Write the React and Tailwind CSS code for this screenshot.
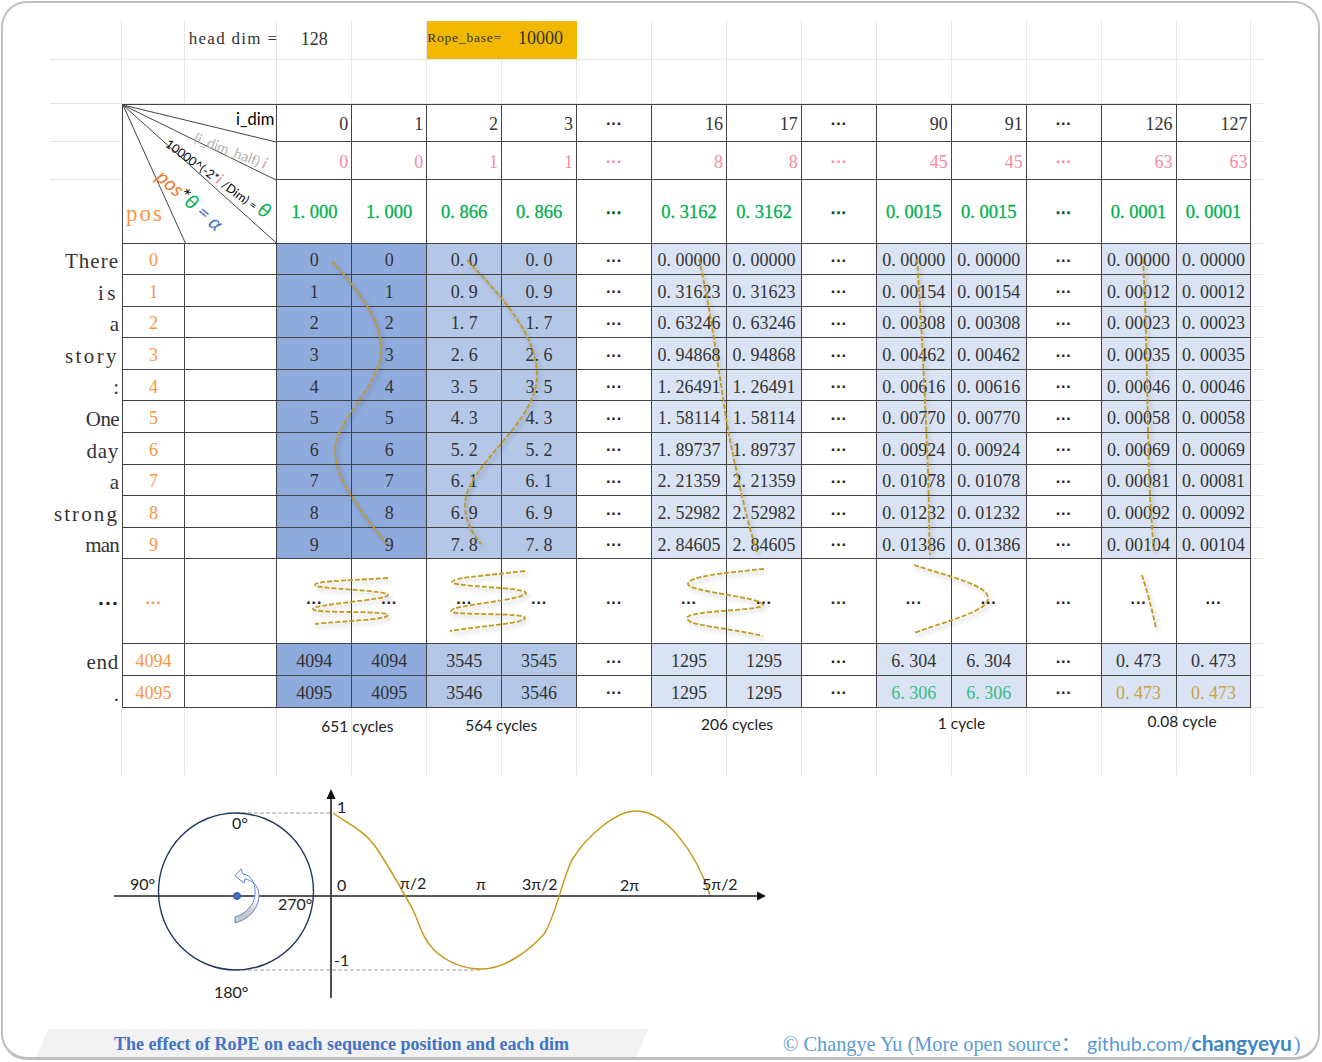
import React, { Fragment } from "react";

const GRID = "border-r border-b border-[#e6e6e6]";
const T = "border-r border-b border-[#444] flex items-center justify-center";
const DOTS = "···";

const fills = ["bg-[#8faadc]", "bg-[#8faadc]", "bg-[#b4c7e7]", "bg-[#b4c7e7]", "", "bg-[#dae3f3]", "bg-[#dae3f3]", "", "bg-[#dae3f3]", "bg-[#dae3f3]", "", "bg-[#dae3f3]", "bg-[#dae3f3]"];

const dims = ["0", "1", "2", "3", DOTS, "16", "17", DOTS, "90", "91", DOTS, "126", "127"];
const half = ["0", "0", "1", "1", DOTS, "8", "8", DOTS, "45", "45", DOTS, "63", "63"];
const theta = ["1. 000", "1. 000", "0. 866", "0. 866", DOTS, "0. 3162", "0. 3162", DOTS, "0. 0015", "0. 0015", DOTS, "0. 0001", "0. 0001"];

const words = [
  ["There", "tracking-[1px]"],
  ["is", "tracking-[3.5px]"],
  ["a", ""],
  ["story", "tracking-[2.4px]"],
  [":", ""],
  ["One", "tracking-[-0.6px]"],
  ["day", "tracking-[0.7px]"],
  ["a", ""],
  ["strong", "tracking-[2.1px]"],
  ["man", "tracking-[-0.8px]"],
];
const B = ["0. 0", "0. 9", "1. 7", "2. 6", "3. 5", "4. 3", "5. 2", "6. 1", "6. 9", "7. 8"];
const C = ["0. 00000", "0. 31623", "0. 63246", "0. 94868", "1. 26491", "1. 58114", "1. 89737", "2. 21359", "2. 52982", "2. 84605"];
const D = ["0. 00000", "0. 00154", "0. 00308", "0. 00462", "0. 00616", "0. 00770", "0. 00924", "0. 01078", "0. 01232", "0. 01386"];
const E = ["0. 00000", "0. 00012", "0. 00023", "0. 00035", "0. 00046", "0. 00058", "0. 00069", "0. 00081", "0. 00092", "0. 00104"];

const dataRows = words.map(([w, cls], i) => ({
  word: w,
  cls,
  pos: String(i),
  vals: [String(i), String(i), B[i], B[i], DOTS, C[i], C[i], DOTS, D[i], D[i], DOTS, E[i], E[i]],
}));

const lastA = ["4094", "4094", "3545", "3545", DOTS, "1295", "1295", DOTS, "6. 304", "6. 304", DOTS, "0. 473", "0. 473"];
const lastB = ["4095", "4095", "3546", "3546", DOTS, "1295", "1295", DOTS, "6. 306", "6. 306", DOTS, "0. 473", "0. 473"];
const lastBColors = ["", "", "", "", "", "", "", "", "text-[#2fc084]", "text-[#2fc084]", "", "text-[#c9a441]", "text-[#c9a441]"];

const cycleCells = ["", "", "", "pl-[44px] pt-[7px]", "", "pl-[38px] pt-[6px]", "", "", "pl-[49px] pt-[5px]", "", "", "pl-[61px] pt-[4px]", "", "", "pl-[46px] pt-[2px]", ""];
const cycleText = { 3: "651 cycles", 5: "564 cycles", 8: "206 cycles", 11: "1 cycle", 14: "0.08 cycle" };

function Dots({ className = "" }) {
  return <span className={"[font-family:'Liberation_Sans',sans-serif] font-bold text-[16px] leading-none text-[#222] " + className}>{DOTS}</span>;
}

function Val({ v, className = "" }) {
  if (v === DOTS) return <Dots className={className} />;
  return <span className={"whitespace-nowrap " + className}>{v}</span>;
}

function Word({ children, className = "" }) {
  return (
    <div className={"flex items-center justify-end pr-[3px] pt-[5px] text-[21px] text-[#333] " + className}>
      {children}
    </div>
  );
}

function Curves() {
  const dash = { fill: "none", stroke: "#c49a1c", strokeWidth: 1.8, strokeDasharray: "5 2" };
  const paths = [
    "M332,261 C352,284 381,315 381,350 C381,385 335,420 335,450 C335,483 368,520 387,544",
    "M467,260 C490,285 537,330 537,375 C537,425 465,465 465,505 C465,520 472,533 481,544",
    "M699,259 C715,330 722,400 730,440 C738,480 748,525 757,552",
    "M917,259 C922,330 925,400 928,470 C929,500 929,530 930,555",
    "M1143,259 C1147,330 1147,400 1149,470 C1150,500 1152,530 1154,552",
    "M388,578 C340,581 315,581 315,585 C315,589 388,590 388,595 C388,600 313,604 313,609 C313,614 388,610 388,615 C388,620 340,621 315,624",
    "M525,571 C480,576 452,578 452,582 C452,587 526,587 526,593 C526,600 451,605 451,611 C451,616 525,612 525,618 C525,623 490,625 450,631",
    "M764,569 C720,573 688,577 688,584 C688,592 763,597 763,605 C763,611 687,610 687,618 C687,626 725,627 763,636",
    "M914,565 C950,577 988,585 988,598 C988,611 950,620 914,633",
    "M1142,575 Q1150,600 1156,628",
  ];
  return (
    <svg className="absolute left-0 top-0 w-[1322px] h-[1062px] pointer-events-none drop-shadow-[2px_3px_2px_rgba(0,0,0,0.25)]" viewBox="0 0 1322 1062">
      {paths.map((d) => (
        <path key={d} d={d} {...dash} />
      ))}
    </svg>
  );
}

function Diagonal() {
  return (
    <div className="relative col-span-2 row-span-3 border-l border-t border-r border-b border-[#444] overflow-hidden">
      <svg className="absolute left-0 top-0 w-[156px] h-[140px]" viewBox="0 0 156 140">
        <g stroke="#444" strokeWidth="1" fill="none">
          <line x1="0" y1="0" x2="155" y2="37.5" />
          <line x1="0" y1="0" x2="155" y2="76" />
          <line x1="0" y1="0" x2="155" y2="139.5" />
          <line x1="0" y1="0" x2="63" y2="139.5" />
        </g>
      </svg>
      <span className="absolute left-[113px] top-[2px] whitespace-nowrap [font-family:'Lato',sans-serif] text-[16.5px] text-black">i_dim</span>
      <span className="absolute left-[72px] top-[22px] origin-left rotate-[21deg] whitespace-nowrap [font-family:'Lato',sans-serif] text-[14px] leading-[18px] text-[#b3b3b3]">
        (i_dim_half) <span className="italic text-[#f48fa0] text-[16px]">i</span>
      </span>
      <span className="absolute left-[45px] top-[26px] origin-left rotate-[36deg] whitespace-nowrap [font-family:'Lato',sans-serif] text-[12.2px] leading-[16px] text-black">
        10000^(-2*<span className="italic text-[#f48fa0] text-[16px]">i</span> /Dim) = <span className="italic text-[#00b050] text-[20px]">θ</span>
      </span>
      <span className="absolute left-[37px] top-[57px] origin-left rotate-[41deg] whitespace-nowrap [font-family:'Lato',sans-serif] text-[20px] leading-[22px] italic">
        <span className="text-[#f4782a]">pos</span>
        <span className="text-black not-italic">*</span>
        <span className="text-[#00b050]">θ</span>
        <span className="text-[#4472c4]"> = α</span>
      </span>
      <span className="absolute left-[3px] top-[92px] text-[23px] tracking-[2px] text-[#f79646]">pos</span>
    </div>
  );
}

function Sheet() {
  return (
    <div className="ml-[50px] grid grid-cols-[72px_63px_92.3px_repeat(13,74.95px)_11.4px] grid-rows-[39px_44px_37.5px_38.5px_63.5px_repeat(10,31.6px)_85px_31.6px_31.6px_67.3px] [font-family:'Liberation_Serif',serif] text-[18px] text-[#333]">
      {/* top sheet row */}
      <div className={GRID} />
      <div className={GRID} />
      <div className={GRID + " flex items-center justify-end pb-[2px] whitespace-nowrap text-[17px] tracking-[1.3px]"}>
        <span className="-mr-[2px]">head dim =</span>
      </div>
      <div className={GRID + " flex items-center justify-center pb-[2px]"}>128</div>
      <div className={GRID} />
      <div className="col-span-2 bg-[#f2b800] flex items-center justify-between pb-[3px] pr-[14px] border-b border-[#e6e6e6]">
        <span className="text-[13.5px] tracking-[0.8px]">Rope_base=</span>
        <span>10000</span>
      </div>
      {Array.from({ length: 9 }).map((_, i) => (
        <div key={i} className={GRID} />
      ))}
      <div className="border-b border-[#e6e6e6]" />

      {/* second sheet row */}
      {Array.from({ length: 16 }).map((_, i) => (
        <div key={i} className={GRID} />
      ))}
      <div className="border-b border-[#e6e6e6]" />

      {/* header rows */}
      <div className="border-b border-[#e6e6e6]" />
      <Diagonal />
      {dims.map((v, i) =>
        v === DOTS ? (
          <div key={i} className={T + " border-t pt-[3px]"}>
            <Dots />
          </div>
        ) : (
          <div key={i} className="border-r border-b border-t border-[#444] flex items-center justify-end pr-[3px] pt-[4px]">
            {v}
          </div>
        )
      )}
      <div className="border-b border-[#e6e6e6]" />

      <div className="border-b border-[#e6e6e6]" />
      {half.map((v, i) =>
        v === DOTS ? (
          <div key={i} className={T + " pt-[3px]"}>
            <Dots className="text-[#f98b9f]" />
          </div>
        ) : (
          <div key={i} className="border-r border-b border-[#444] flex items-center justify-end pr-[3px] pt-[4px] text-[#f98b9f]">
            {v}
          </div>
        )
      )}
      <div className="border-b border-[#e6e6e6]" />

      <div />
      {theta.map((v, i) => (
        <div key={i} className={T + " pt-[4px] text-[#00b050] text-[18.5px] [-webkit-text-stroke:0.3px_#00b050]"}>
          {v === DOTS ? <Dots className="text-[#00b050]" /> : <Val v={v} />}
        </div>
      ))}
      <div className="border-b border-[#e6e6e6]" />

      {/* data rows */}
      {dataRows.map((r) => (
        <Fragment key={r.pos}>
          <Word className={r.cls}>{r.word}</Word>
          <div className={T + " border-l pt-[4px] text-[#f79646]"}>{r.pos}</div>
          <div className={T} />
          {r.vals.map((v, i) => (
            <div key={i} className={T + " pt-[4px] " + fills[i]}>
              <Val v={v} />
            </div>
          ))}
          <div className="border-b border-[#e6e6e6]" />
        </Fragment>
      ))}

      {/* ellipsis row */}
      <div className="flex items-center justify-end pr-[3px] pt-[2px]">
        <Dots className="text-[21px]" />
      </div>
      <div className={T + " border-l pt-[4px]"}>
        <Dots className="text-[#f79646]" />
      </div>
      <div className={T} />
      {dims.map((_, i) => (
        <div key={i} className={T + " pt-[4px]"}>
          <Dots />
        </div>
      ))}
      <div className="border-b border-[#e6e6e6]" />

      {/* last rows */}
      <Word className="tracking-[0.7px]">end</Word>
      <div className={T + " border-l pt-[4px] text-[#f79646]"}>4094</div>
      <div className={T} />
      {lastA.map((v, i) => (
        <div key={i} className={T + " pt-[4px] " + fills[i]}>
          <Val v={v} />
        </div>
      ))}
      <div className="border-b border-[#e6e6e6]" />

      <Word>.</Word>
      <div className={T + " border-l pt-[4px] text-[#f79646]"}>4095</div>
      <div className={T} />
      {lastB.map((v, i) => (
        <div key={i} className={T + " pt-[4px] " + fills[i]}>
          <Val v={v} className={lastBColors[i]} />
        </div>
      ))}
      <div className="border-b border-[#e6e6e6]" />

      {/* cycles row */}
      {cycleCells.map((c, i) => (
        <div key={i} className={"border-r border-[#e6e6e6] whitespace-nowrap [font-family:'Lato',sans-serif] text-[15.5px] text-[#222] " + c}>
          {cycleText[i]}
        </div>
      ))}
      <div />
    </div>
  );
}

function Diagram() {
  const text = { fontFamily: "Lato, sans-serif", fontSize: 16, fill: "#222" };
  const labels = [
    ["0°", 232, 829],
    ["90°", 130, 890],
    ["270°", 278, 910],
    ["180°", 214, 998],
    ["1", 337, 813],
    ["0", 337, 891],
    ["-1", 334, 966],
    ["π/2", 400, 889],
    ["π", 476, 890],
    ["3π/2", 522, 890],
    ["2π", 620, 891],
    ["5π/2", 702, 890],
  ];
  return (
    <svg className="block w-[800px] h-[250px]" viewBox="0 775 800 250">
      <defs>
        <linearGradient id="arrowFill" x1="0" y1="0" x2="0" y2="1">
          <stop offset="0.55" stopColor="#ffffff" />
          <stop offset="0.8" stopColor="#c9c9c9" />
        </linearGradient>
      </defs>
      <line x1="236" y1="813" x2="331" y2="813" stroke="#bdbdbd" strokeWidth="1.3" strokeDasharray="4 2" />
      <line x1="236" y1="970" x2="481" y2="970" stroke="#bdbdbd" strokeWidth="1.3" strokeDasharray="4 2" />
      <ellipse cx="236" cy="891.5" rx="77.5" ry="78.5" fill="none" stroke="#203864" strokeWidth="1.4" />
      <line x1="114" y1="896" x2="758" y2="896" stroke="#222" strokeWidth="1.6" />
      <polygon points="766,896 757,891.5 757,900.5" fill="#111" />
      <line x1="331" y1="797" x2="331" y2="998" stroke="#222" strokeWidth="1.6" />
      <polygon points="331,789 326.5,799 335.5,799" fill="#111" />
      <path
        d="M333,813 C352,826 365,832 375,846 C390,868 402,890 412,908 C420,924 422,938 434,950 C448,963 465,969 482,969 C505,969 530,950 544,934 C555,918 562,880 572,860 C585,838 615,811 636,811 C665,811 695,850 710,895"
        fill="none"
        stroke="#c49a1c"
        strokeWidth="1.5"
      />
      <circle cx="237" cy="896" r="3.5" fill="#4472c4" stroke="#2f5597" />
      <path
        d="M235,923 C252,918 259,906 259,895 C259,886 252,880 245,879 L244,883 L235,876 L241,869 L243,874 C252,875 256,885 255,895 C254,906 245,914 235,917 Z"
        fill="url(#arrowFill)"
        stroke="#5b86d6"
        strokeWidth="1"
      />
      {labels.map(([t, x, y]) => (
        <text key={t} x={x} y={y} {...text}>
          {t}
        </text>
      ))}
    </svg>
  );
}

function Footer() {
  return (
    <div className="mt-[4px] h-[29px] flex items-center">
      <div className="ml-[36px] w-[612px] h-[29px] pt-[2px] bg-[#f2f2f2] [clip-path:polygon(12px_0,100%_0,600px_100%,0_100%)] flex items-center pl-[78px] [font-family:'Liberation_Serif',serif] font-bold text-[#4472c4] text-[18px] whitespace-nowrap">
        The effect of RoPE on each sequence position and each dim
      </div>
      <div className="ml-[135px] whitespace-nowrap flex items-baseline text-[#5b9bd5] [font-family:'Liberation_Serif','Noto_Sans_CJK_SC',serif] text-[20.3px]">
        <span>© Changye Yu (More open source：</span>
        <span className="ml-[6px] [font-family:'Lato',sans-serif] text-[19.6px]">github.com/</span>
        <span className="[font-family:'Lato',sans-serif] font-bold text-[21px] text-[#3d85c6]">changyeyu</span>
        <span className="ml-[2px]">)</span>
      </div>
    </div>
  );
}

export default function App() {
  return (
    <div className="relative w-[1322px] h-[1062px] bg-white overflow-hidden pt-[21px]">
      <Sheet />
      <Diagram />
      <Footer />
      <Curves />
      <div className="absolute left-[1px] top-[1px] w-[1319px] h-[1059px] rounded-[26px] border-[2.5px] border-b-[3.5px] border-[#bfbfbf] pointer-events-none" />
    </div>
  );
}
